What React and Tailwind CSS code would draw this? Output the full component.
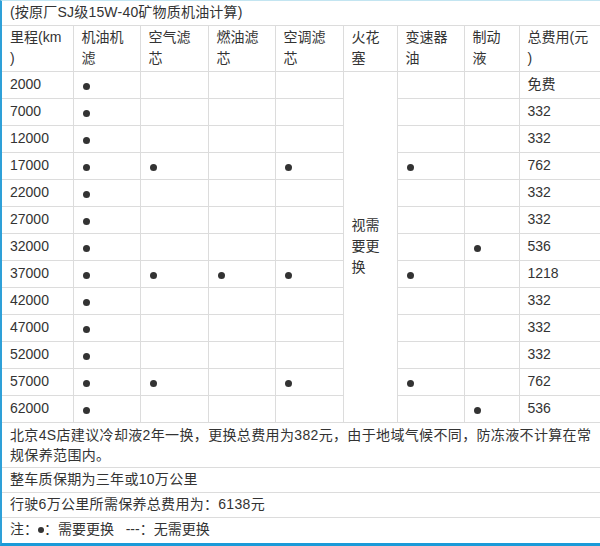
import React from 'react';

const headers = [
  ['里程(km', ')'],
  ['机油机', '滤'],
  ['空气滤', '芯'],
  ['燃油滤', '芯'],
  ['空调滤', '芯'],
  ['火花', '塞'],
  ['变速器', '油'],
  ['制动', '液'],
  ['总费用(元', ')'],
];

// columns: oil, air, fuel, ac, gearbox, brake
const rows = [
  ['2000', [1, 0, 0, 0, 0, 0], '免费'],
  ['7000', [1, 0, 0, 0, 0, 0], '332'],
  ['12000', [1, 0, 0, 0, 0, 0], '332'],
  ['17000', [1, 1, 0, 1, 1, 0], '762'],
  ['22000', [1, 0, 0, 0, 0, 0], '332'],
  ['27000', [1, 0, 0, 0, 0, 0], '332'],
  ['32000', [1, 0, 0, 0, 0, 1], '536'],
  ['37000', [1, 1, 1, 1, 1, 0], '1218'],
  ['42000', [1, 0, 0, 0, 0, 0], '332'],
  ['47000', [1, 0, 0, 0, 0, 0], '332'],
  ['52000', [1, 0, 0, 0, 0, 0], '332'],
  ['57000', [1, 1, 0, 1, 1, 0], '762'],
  ['62000', [1, 0, 0, 0, 0, 1], '536'],
];

const cell = 'border border-[#dcdcdc] px-2 align-middle';

const Dot = ({ on }) =>
  on ? <span className="inline-block ml-[1px] w-[7px] h-[7px] rounded-full bg-[#333] align-[-1px]" /> : null;

export default function App() {
  return (
    <div
      className="w-[600px] h-[546px] bg-white overflow-hidden text-[14px] text-[#333] leading-[21px] border-l-2 border-l-[#2ea0d8] border-t border-t-[#c3e5f1] border-b-[3px] border-b-[#1a9ad8]"
      style={{ fontFamily: '"Liberation Sans", "Noto Sans CJK SC", sans-serif' }}
    >
      <table className="w-[598px] border-collapse table-fixed -mt-px">
        <colgroup>
          <col className="w-[71px]" />
          <col className="w-[67px]" />
          <col className="w-[68px]" />
          <col className="w-[67px]" />
          <col className="w-[68px]" />
          <col className="w-[54px]" />
          <col className="w-[67px]" />
          <col className="w-[55px]" />
          <col className="w-[81px]" />
        </colgroup>
        <tbody>
          <tr className="h-[25px]">
            <td colSpan={9} className="border-b border-[#dcdcdc] px-2 whitespace-nowrap tracking-[0.2px]">
              (按原厂SJ级15W-40矿物质机油计算)
            </td>
          </tr>
          <tr className="h-[46px]">
            {headers.map((h, i) => (
              <td
                key={i}
                className={`${cell} whitespace-nowrap ${i === 0 ? 'border-l-0' : ''} ${i === 8 ? 'border-r-0' : ''}`}
              >
                {h[0]}
                <br />
                {h[1]}
              </td>
            ))}
          </tr>
          {rows.map(([km, d, cost], r) => (
            <tr key={km} className="h-[27px]">
              <td className={`${cell} border-l-0`}>{km}</td>
              <td className={cell}><Dot on={d[0]} /></td>
              <td className={cell}><Dot on={d[1]} /></td>
              <td className={cell}><Dot on={d[2]} /></td>
              <td className={cell}><Dot on={d[3]} /></td>
              {r === 0 && (
                <td rowSpan={13} className={`${cell} whitespace-nowrap`}>
                  视需
                  <br />
                  要更
                  <br />
                  换
                </td>
              )}
              <td className={cell}><Dot on={d[4]} /></td>
              <td className={cell}><Dot on={d[5]} /></td>
              <td className={`${cell} border-r-0`}>{cost}</td>
            </tr>
          ))}
          <tr className="h-[45px]">
            <td colSpan={9} className="border-y border-[#dcdcdc] px-2 leading-[20px] whitespace-nowrap tracking-[0.35px]">
              北京4S店建议冷却液2年一换，更换总费用为382元，由于地域气候不同，防冻液不计算在常
              <br />
              规保养范围内。
            </td>
          </tr>
          <tr className="h-[25px]">
            <td colSpan={9} className="border-y border-[#dcdcdc] px-2 whitespace-nowrap tracking-[0.3px]">
              整车质保期为三年或10万公里
            </td>
          </tr>
          <tr className="h-[25px]">
            <td colSpan={9} className="border-y border-[#dcdcdc] px-2 whitespace-nowrap tracking-[0.3px]">
              行驶6万公里所需保养总费用为：6138元
            </td>
          </tr>
          <tr className="h-[25px]">
            <td colSpan={9} className="border-t border-[#dcdcdc] px-2 whitespace-nowrap">
              注：<span className="inline-block w-[6px] h-[6px] rounded-full bg-[#333] align-[1px]" />：需要更换&nbsp;&nbsp;&nbsp;---：无需更换
            </td>
          </tr>
        </tbody>
      </table>
    </div>
  );
}
